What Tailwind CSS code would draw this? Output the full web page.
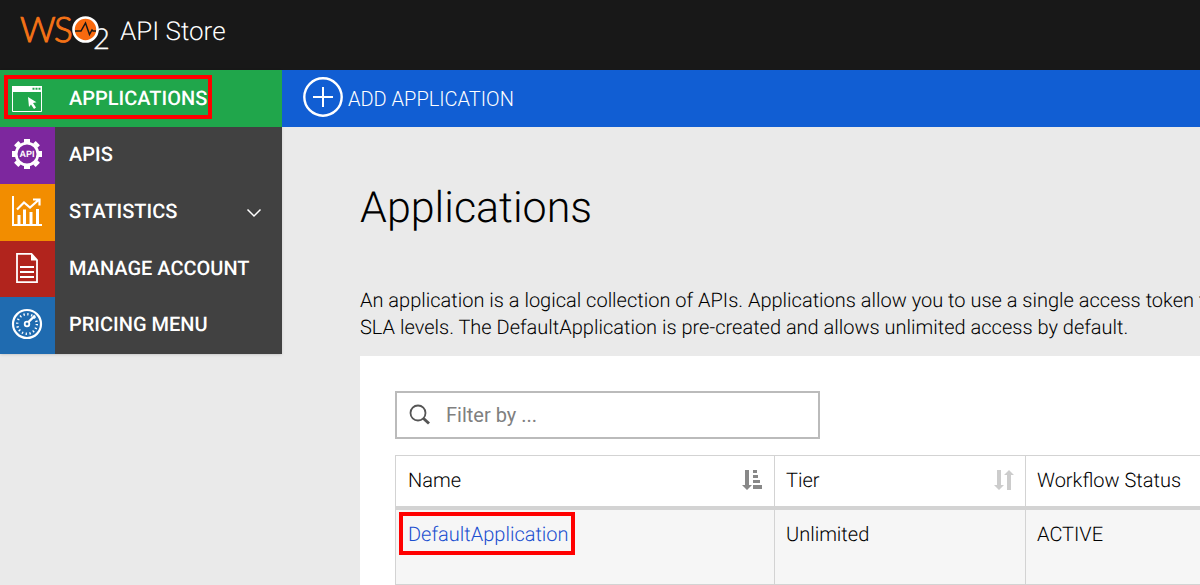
<!DOCTYPE html>
<html lang="en">
<head>
<meta charset="utf-8">
<title>API Store - Applications</title>
<script src="https://cdn.jsdelivr.net/npm/@tailwindcss/browser@4"></script>
</head>
<body class="flex min-h-screen flex-col overflow-hidden bg-[#eaeaea] font-['Roboto',sans-serif] text-xl font-light text-black [text-rendering:geometricPrecision]">
<header class="flex h-[70px] shrink-0 items-center bg-[#181818] px-5 pb-2">
  <a href="#" class="flex items-center gap-2 text-white">
    <svg class="h-[60px] w-[92px] overflow-visible" viewBox="20 2 92 60" aria-label="WSO2">
      <g font-family="Lato" font-weight="300" stroke-width="1">
        <text x="20" y="43" font-size="35" fill="#f47216" stroke="#f47216">W</text>
        <text x="54" y="43" font-size="35" fill="#f47216" stroke="#f47216">S</text>
        <text x="93" y="50" font-size="29" fill="#fff" stroke="#fff" stroke-width=".300">2</text>
      </g>
      <circle cx="85.500" cy="30.500" r="12" fill="#f9690e" stroke="#fff" stroke-width="2.600"/>
      <path d="M75 32h6l4.500-8 4 11.500 2.500-4.500 1 1H96" fill="none" stroke="#181818" stroke-width="1.500"/>
    </svg>
    <span class="pt-0.5 text-[26px] font-light">API Store</span>
  </a>
</header>
<div class="flex flex-1 items-start">
  <nav class="w-[282px] shrink-0 bg-[#414141] font-medium text-white shadow-sm">
    <a href="#" class="relative flex h-[57px] items-center bg-[#20a64b]">
      <span class="flex w-[55px] justify-center pr-px">
        <svg class="size-8" viewBox="0 0 32 32" fill="none" stroke="#fff"><path d="M1.500 3.500h29v25h-29z"/><path d="M1 3h30v6H1z" fill="#fff" stroke="none"/><path d="M21.500 5.700h8.500" stroke="#20a64b" stroke-width="2" stroke-dasharray="2 1"/><path d="M17 14l8.500 5.200-3.500.800 3 4.500-2 1.500-3-4.500-2 2.500z" fill="#fff" stroke="none"/></svg>
      </span>
      <span class="pb-0.5 pl-3.5">APPLICATIONS</span>
      <span class="absolute top-[5px] left-1 h-11 w-52 border-4 border-[#f00]"></span>
    </a>
    <a href="#" class="flex h-[57px] items-center">
      <span class="flex h-full w-[55px] items-center justify-center bg-[#7d279e] pr-px pb-1">
        <svg class="size-8" viewBox="0 0 32 32"><g stroke="#fff" fill="none"><circle cx="16" cy="16" r="10.900" stroke-width="2.800"/><path stroke-width="6" d="M16 1v4M16 27v4M1 16h4M27 16h4M5.200 5.200l2.500 2.500M24.300 24.300l2.500 2.500M5.200 26.800l2.500-2.500M24.300 7.700l2.500-2.500"/></g><text x="16" y="19" font-family="Liberation Sans" font-weight="700" font-size="9" text-anchor="middle" fill="#fff">API</text></svg>
      </span>
      <span class="pb-1 pl-3.5">APIS</span>
    </a>
    <a href="#" class="flex h-[57px] items-center">
      <span class="flex h-full w-[55px] items-center justify-center bg-[#f28d00] pr-px pb-1">
        <svg class="size-8" viewBox="0 0 32 32" fill="none" stroke="#fff"><path stroke-width="2" d="M2 1v29h29"/><path stroke-width="3" d="M8 29v-9M13.500 29V14.500M20 29V17M26.500 29V14"/><path stroke-width="2.200" d="M6 14.500l7-7 6 5L27.500 5M22 4.500h6.500v6"/></svg>
      </span>
      <span class="flex-1 pb-1 pl-3.5">STATISTICS</span>
      <svg class="mr-5 h-4 w-4" viewBox="0 0 16 16" fill="none" stroke="#fff" stroke-width="1.500"><path d="M1.500 4.500L8 11l6.500-6.500"/></svg>
    </a>
    <a href="#" class="flex h-14 items-center">
      <span class="flex h-full w-[55px] items-center justify-center bg-[#b1241d] pr-px pb-0.5">
        <svg class="size-8" viewBox="0 0 32 32" fill="none" stroke="#fff" stroke-width="1.800"><path d="M6 1.900h14.500L26 8v22.100H6z"/><path d="M20 2v6.500h6.500z" fill="#fff" stroke="none"/><path stroke-width="2" d="M9 15h14M9 20h14M9 25h14"/></svg>
      </span>
      <span class="pb-0.5 pl-3.5">MANAGE ACCOUNT</span>
    </a>
    <a href="#" class="flex h-[57px] items-center">
      <span class="flex h-full w-[55px] items-center justify-center bg-[#1f6bb0] pr-px pb-1">
        <svg class="size-8" viewBox="0 0 32 32" fill="none" stroke="#fff"><circle cx="16" cy="16" r="14" stroke-width="2.200"/><circle cx="16" cy="16" r="9.800" stroke-width="2.400" stroke-dasharray="1.300 2.548"/><circle cx="16" cy="16" r="2.300" stroke-width="1.800"/><path d="M17.500 14L24 7.500" stroke-width="2.400"/></svg>
      </span>
      <span class="pb-1 pl-3.5">PRICING MENU</span>
    </a>
  </nav>
  <main class="min-w-0 flex-1">
    <div class="flex h-[57px] items-center bg-[#115ed3] pl-5">
      <button type="button" class="flex items-center gap-1 text-white">
        <svg class="mb-1 size-[42px]" viewBox="0 0 42 42" fill="none" stroke="#fff"><circle cx="21" cy="21" r="18.700" stroke-width="2.400"/><path d="M11 21h20M21 11v20" stroke-width="2"/></svg>
        <span>ADD APPLICATION</span>
      </button>
    </div>
    <div class="pt-[54px] pl-[78px]">
      <h1 class="text-[43px] leading-[54px]">Applications</h1>
      <p class="mt-[52px] whitespace-nowrap leading-[27px]">An application is a logical collection of APIs. Applications allow you to use a single access token to<br>SLA levels. The DefaultApplication is pre-created and allows unlimited access by default.</p>
      <section class="mt-[15px] overflow-hidden bg-white pt-[35px] pl-[35px]">
        <label class="flex h-12 w-[425px] items-center border-2 border-[#bbb] bg-white px-3">
          <svg class="size-[22px] shrink-0" viewBox="0 0 22 22" fill="none" stroke="#555"><circle cx="9" cy="9" r="7.500" stroke-width="1.800"/><path d="M14.500 14.500l5.500 5" stroke-width="3"/></svg>
          <input type="text" aria-label="Filter applications" placeholder="Filter by ..." class="ml-[15px] min-w-0 flex-1 font-normal outline-none placeholder:text-[#808080]">
        </label>
        <table class="mt-4 w-[1100px] table-fixed border-collapse text-left">
          <colgroup><col class="w-[379px]"><col class="w-[251px]"><col></colgroup>
          <thead>
            <tr class="h-[52px]">
              <th class="border border-b-4 border-[#d3d3d3] px-3 pb-0.5 font-light"><span class="flex items-center justify-between">Name
                <svg class="-mr-0.5 size-6" viewBox="0 0 24 24" fill="#888"><path d="M5 2h4v15h3l-5 5-5-5h3zM13 2h4v3h-4zM13 7h5v3h-5zM13 12h7v3h-7zM13 17h9v4h-9z"/></svg></span></th>
              <th class="border border-b-4 border-[#d3d3d3] px-[11px] pb-0.5 font-light"><span class="flex items-center justify-between">Tier
                <svg class="-mr-0.5 size-6" viewBox="0 0 24 24" fill="#ccc"><path d="M5 2h4v15h3l-5 5-5-5h3zM15 22h4V7h3l-5-5-5 5h3z"/></svg></span></th>
              <th class="border border-b-4 border-[#d3d3d3] px-[11px] pb-0.5 font-light">Workflow Status</th>
            </tr>
          </thead>
          <tbody>
            <tr class="h-[77px] bg-[#f6f6f6] align-top">
              <td class="border border-[#d3d3d3] px-3 pt-2.5"><a href="#" class="relative text-[#1b4fd0]">DefaultApplication<span class="absolute -top-2.5 -left-[9px] h-[43px] w-44 border-4 border-[#f00]"></span></a></td>
              <td class="border border-[#d3d3d3] px-[11px] pt-2.5">Unlimited</td>
              <td class="border border-[#d3d3d3] px-[11px] pt-2.5">ACTIVE</td>
            </tr>
          </tbody>
        </table>
      </section>
    </div>
  </main>
</div>
</body>
</html>
